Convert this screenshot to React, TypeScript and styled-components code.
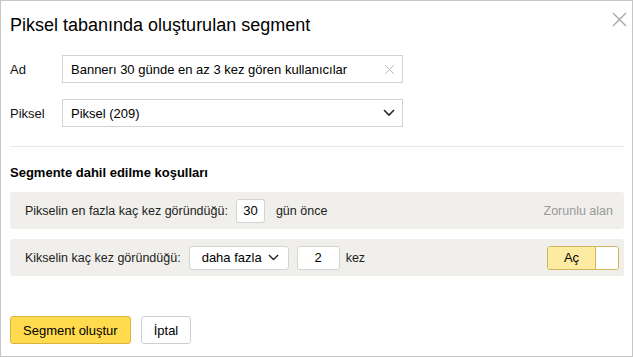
import styled, { createGlobalStyle } from "styled-components"

const GlobalStyle = createGlobalStyle`
	body {
		margin: 0;
		background: #fff;
		font-family: "Liberation Sans", Arial, sans-serif;
		color: #000;
	}
`

const ClearIcon = () => (
	<svg width="11" height="11" viewBox="0 0 11 11">
		<path d="M1 1L10 10M10 1L1 10" stroke="#b8b8b8" strokeWidth="1" fill="none" />
	</svg>
)

const Chevron = ({ size = 12 }: { size?: number }) => (
	<svg width={size} height={size * 0.6} viewBox="0 0 12 7">
		<path d="M1 1L6 6L11 1" stroke="#222" strokeWidth="1.5" fill="none" />
	</svg>
)

const CloseIcon = () => (
	<svg width="15" height="15" viewBox="0 0 15 15">
		<path d="M1 1L14 14M14 1L1 14" stroke="#a8a8a8" strokeWidth="1.4" fill="none" />
	</svg>
)

const App = () => {
	return (
		<>
			<GlobalStyle />
			<Dialog>
				<Header>
					<Title>Piksel tabanında oluşturulan segment</Title>
					<CloseButton>
						<CloseIcon />
					</CloseButton>
				</Header>

				<FieldRow>
					<Label>Ad</Label>
					<TextInput>
						<span>Bannerı 30 günde en az 3 kez gören kullanıcılar</span>
						<ClearIcon />
					</TextInput>
				</FieldRow>
				<FieldRow>
					<Label>Piksel</Label>
					<TextInput>
						<span>Piksel (209)</span>
						<Chevron />
					</TextInput>
				</FieldRow>

				<Divider />

				<SectionTitle>Segmente dahil edilme koşulları</SectionTitle>

				<Condition>
					<span>Pikselin en fazla kaç kez göründüğü:</span>
					<SmallInput $width={29} $gap={8}>30</SmallInput>
					<Suffix $gap={11}>gün önce</Suffix>
					<Hint>Zorunlu alan</Hint>
				</Condition>

				<Condition $tight>
					<span>Kikselin kaç kez göründüğü:</span>
					<SmallSelect>
						daha fazla
						<Chevron size={11} />
					</SmallSelect>
					<SmallInput $width={43} $gap={8}>2</SmallInput>
					<Suffix $gap={6}>kez</Suffix>
					<Toggle>
						<ToggleLabel>Aç</ToggleLabel>
						<ToggleKnob />
					</Toggle>
				</Condition>

				<Footer>
					<Button $primary>Segment oluştur</Button>
					<Button>İptal</Button>
				</Footer>
			</Dialog>
		</>
	)
}

const Dialog = styled.div`
	box-sizing: border-box;
	width: 633px;
	height: 357px;
	border: 1px solid #c6c6c6;
	padding: 0 8px 0 9px;
	display: flex;
	flex-direction: column;
	background: #fff;
`

const Header = styled.div`
	display: flex;
	justify-content: space-between;
	align-items: flex-start;
	padding-top: 11px;
	height: 43px;
`

const Title = styled.h1`
	margin: 3px 0 0;
	font-size: 18px;
	font-weight: normal;
	line-height: 20px;
	color: #000;
`

const CloseButton = styled.div`
	display: flex;
	margin-right: -3px;
	width: 15px;
	height: 15px;
`

const FieldRow = styled.div`
	display: flex;
	align-items: center;
	height: 28px;
	margin-bottom: 16px;
`

const Label = styled.div`
	width: 52px;
	font-size: 13px;
	color: #111;
`

const TextInput = styled.div`
	box-sizing: border-box;
	width: 341px;
	height: 28px;
	border: 1px solid #d3d3d3;
	padding: 0 7px 0 8px;
	display: flex;
	align-items: center;
	justify-content: space-between;
	font-size: 13px;
	color: #000;
`

const Divider = styled.div`
	height: 1px;
	background: #e6e6e6;
	margin: 3px 0 0;
`

const SectionTitle = styled.div`
	margin: 18px 0 11px;
	font-size: 13px;
	font-weight: bold;
	line-height: 16px;
	color: #000;
`

const Condition = styled.div<{ $tight?: boolean }>`
	display: flex;
	align-items: center;
	height: 37px;
	margin-bottom: 10px;
	padding: 0 ${(p) => (p.$tight ? 5 : 11)}px 0 15px;
	border-radius: 3px;
	background: #f0efeb;
	font-size: 12.5px;
	color: #222;
`

const SmallInput = styled.div<{ $width: number; $gap: number }>`
	box-sizing: border-box;
	width: ${(p) => p.$width}px;
	height: 24px;
	margin-left: ${(p) => p.$gap}px;
	border: 1px solid #d3d3d3;
	border-radius: 3px;
	background: #fff;
	display: flex;
	align-items: center;
	justify-content: center;
	font-size: 13px;
	color: #000;
`

const SmallSelect = styled.div`
	box-sizing: border-box;
	width: 100px;
	height: 24px;
	margin-left: 8px;
	padding: 0 9px 0 12px;
	border: 1px solid #d3d3d3;
	border-radius: 3px;
	background: #fff;
	display: flex;
	align-items: center;
	justify-content: space-between;
	font-size: 13px;
	color: #000;
`

const Suffix = styled.span<{ $gap: number }>`
	margin-left: ${(p) => p.$gap}px;
`

const Hint = styled.span`
	margin-left: auto;
	color: #999;
`

const Toggle = styled.div`
	box-sizing: border-box;
	margin-left: auto;
	width: 72px;
	height: 24px;
	border: 1px solid #d2b45a;
	border-radius: 3px;
	display: flex;
	overflow: hidden;
	font-size: 13px;
`

const ToggleLabel = styled.div`
	flex: 1;
	background: #fdeba2;
	display: flex;
	align-items: center;
	justify-content: center;
	color: #000;
`

const ToggleKnob = styled.div`
	width: 22px;
	background: #fff;
	border-left: 1px solid #d2b45a;
`

const Footer = styled.div`
	display: flex;
	gap: 10px;
	margin-top: auto;
	margin-bottom: 12px;
`

const Button = styled.div<{ $primary?: boolean }>`
	box-sizing: border-box;
	height: 28px;
	padding: 0 12px;
	border: 1px solid ${(p) => (p.$primary ? "#d9b43c" : "#cfcfcf")};
	border-radius: 3px;
	background: ${(p) => (p.$primary ? "#ffdb4d" : "#fff")};
	display: flex;
	align-items: center;
	font-size: 13px;
	color: #000;
`

export default App
